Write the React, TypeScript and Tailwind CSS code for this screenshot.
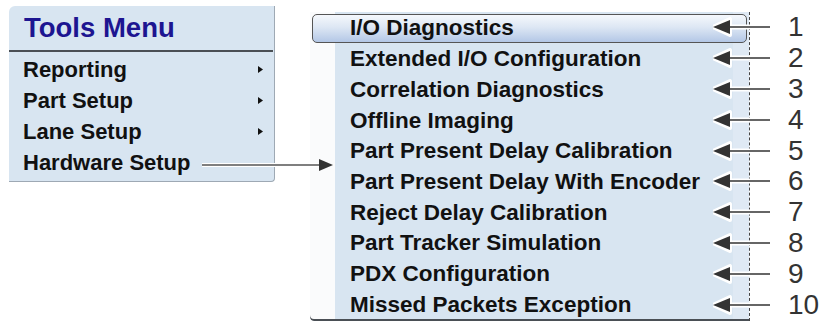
import React from "react"

const leftItems = [
  { label: "Reporting", sub: true },
  { label: "Part Setup", sub: true },
  { label: "Lane Setup", sub: true },
  { label: "Hardware Setup", sub: false },
]

const hardwareItems = [
  "I/O Diagnostics",
  "Extended I/O Configuration",
  "Correlation Diagnostics",
  "Offline Imaging",
  "Part Present Delay Calibration",
  "Part Present Delay With Encoder",
  "Reject Delay Calibration",
  "Part Tracker Simulation",
  "PDX Configuration",
  "Missed Packets Exception",
]

function SubArrow() {
  return (
    <svg width="5" height="7" viewBox="0 0 5 7" className="shrink-0">
      <polygon points="0,0 5,3.5 0,7" fill="#111" />
    </svg>
  )
}

function Callout({ n }: { n: number }) {
  return (
    <div className="flex h-[30.8px] items-center">
      <svg width="60" height="22" viewBox="0 0 60 22" className="shrink-0">
        <line x1="14" y1="11" x2="57" y2="11" stroke="#fff" strokeWidth="5" />
        <polygon points="0,11 17,3 17,19" fill="#fff" stroke="#fff" strokeWidth="4" strokeLinejoin="round" />
        <line x1="14" y1="11" x2="57" y2="11" stroke="#333" strokeWidth="1.6" />
        <polygon points="0,11 17,4 17,18" fill="#333" />
      </svg>
      <span className="ml-[15px] text-[28px] leading-none text-[#333]">{n}</span>
    </div>
  )
}

function ToolsMenu() {
  return (
    <div className="ml-[9px] mt-[6px] h-[176px] w-[266px] shrink-0 overflow-hidden rounded-tl-[6px] rounded-br-[4px] border-r border-b border-[#9ea9b4] bg-[#d8e5f1]">
      <div className="flex h-[44px] items-center pl-[15px] text-[27.5px] font-bold text-[#1d1591]">
        Tools Menu
      </div>
      <div className="mr-[1px] h-[2px] bg-[#4a4f55]" />
      <div className="pt-[2px]">
        {leftItems.map((item) => (
          <div
            key={item.label}
            className="flex h-[31px] items-center justify-between pl-[14px] pr-[11px] text-[22px] font-bold text-[#111]"
          >
            <span>{item.label}</span>
            {item.sub && <SubArrow />}
          </div>
        ))}
      </div>
    </div>
  )
}

function HardwareMenu() {
  return (
    <div className="ml-[35px] mt-[12px] h-[309px] w-[440px] shrink-0 rounded-bl-[4px] border-r border-dashed border-[#444] bg-[linear-gradient(to_right,#fafbfc_25px,#d8e5f1_25px,#d8e5f1_423px,#dfe9f4_423px)] pt-[1px] shadow-[inset_0_-2px_0_#4a4f55]">
      {hardwareItems.map((label, i) => (
        <div key={label} className="flex h-[30.7px] items-center">
          {i === 0 ? (
            <div className="ml-[2px] mr-[2px] flex h-[29px] flex-1 items-center rounded-[5px] border border-[#555] bg-[linear-gradient(to_bottom,#f5f8fc,#dde7f4_45%,#b3c7e6)] pl-[37px] text-[22.5px] font-bold text-[#111]">
              {label}
            </div>
          ) : (
            <div className="pl-[40px] text-[22.5px] font-bold text-[#111]">{label}</div>
          )}
        </div>
      ))}
    </div>
  )
}

export default function App() {
  return (
    <div className="relative h-[324px] w-[820px] overflow-hidden bg-white font-['Liberation_Sans',Arial,sans-serif]">
      <div className="flex items-start">
        <ToolsMenu />
        <HardwareMenu />
        <div className="-ml-[37px] mt-[12px] flex flex-col">
          {hardwareItems.map((label, i) => (
            <Callout key={label} n={i + 1} />
          ))}
        </div>
      </div>
      <svg width="820" height="324" className="pointer-events-none absolute left-0 top-0">
        <line x1="202" y1="165" x2="322" y2="165" stroke="#fff" strokeWidth="4" />
        <line x1="202" y1="165" x2="322" y2="165" stroke="#555" strokeWidth="1.6" />
        <polygon points="319,159 333,165 319,171" fill="#333" />
      </svg>
    </div>
  )
}
